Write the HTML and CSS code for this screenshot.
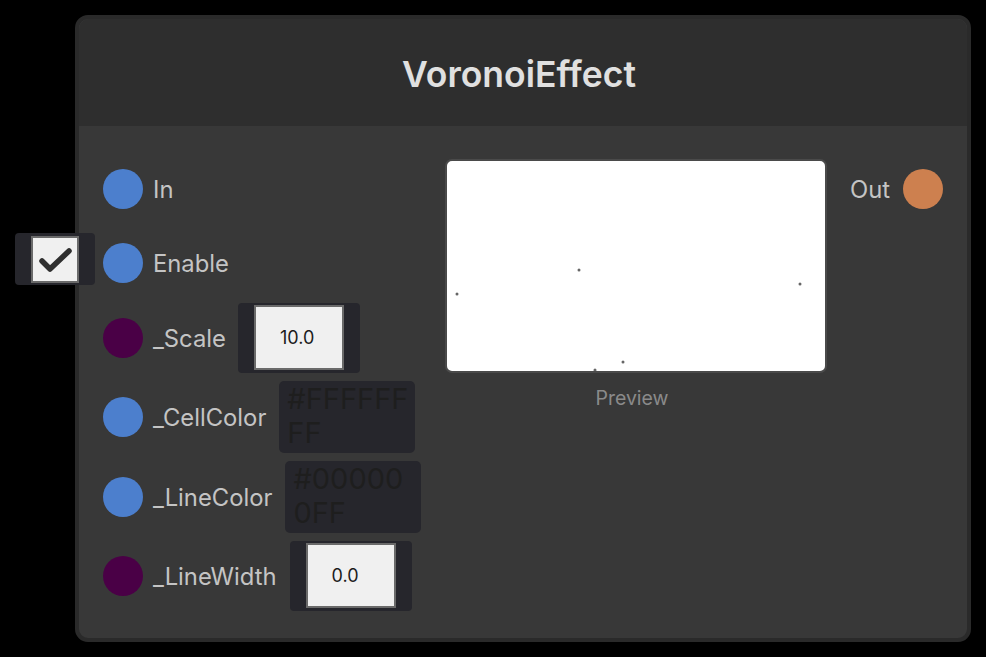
FILE: index.html
```html
<!DOCTYPE html>
<html>
<head>
<meta charset="utf-8">
<link rel="stylesheet" href="styles.css">
</head>
<body>
<div class="node">
  <div class="header"><span class="title">VoronoiEffect</span></div>
  <div class="content">
    <div class="inputs">
      <div class="row r-in">
        <span class="port blue"></span><span class="label">In</span>
      </div>
      <div class="row r-enable">
        <div class="toggle">
          <div class="check">
            <svg width="44" height="43" viewBox="0 0 44 43"><path d="M9 23 L17 31 L36 13" fill="none" stroke="#2f2f2f" stroke-width="5.5" stroke-linecap="round" stroke-linejoin="round"/></svg>
          </div>
        </div>
        <span class="port blue"></span><span class="label">Enable</span>
      </div>
      <div class="row r-scale">
        <span class="port purple"></span><span class="label">_Scale</span>
        <div class="numfield"><div class="numbox">10.0</div></div>
      </div>
      <div class="row r-cell">
        <span class="port blue"></span><span class="label">_CellColor</span>
        <div class="colorfield">#FFFFFF<br>FF</div>
      </div>
      <div class="row r-line">
        <span class="port blue"></span><span class="label">_LineColor</span>
        <div class="colorfield">#00000<br>0FF</div>
      </div>
      <div class="row r-width">
        <span class="port purple"></span><span class="label">_LineWidth</span>
        <div class="numfield"><div class="numbox">0.0</div></div>
      </div>
    </div>
    <div class="preview-col">
      <div class="preview">
        <svg width="378" height="210" viewBox="0 0 378 210">
          <circle cx="10" cy="133" r="1.5" fill="#666"/>
          <circle cx="132" cy="109" r="1.5" fill="#666"/>
          <circle cx="353" cy="123" r="1.5" fill="#666"/>
          <circle cx="176" cy="201" r="1.5" fill="#666"/>
          <circle cx="148" cy="209" r="1.5" fill="#666"/>
        </svg>
      </div>
      <div class="preview-label">Preview</div>
    </div>
    <div class="outputs">
      <div class="row out-row">
        <span class="label">Out</span><span class="port orange"></span>
      </div>
    </div>
  </div>
</div>
</body>
</html>
```

FILE: styles.css
```css
html, body {
  margin: 0;
  padding: 0;
  background: #000;
}
body {
  width: 986px;
  height: 657px;
  font-family: Inter, "Noto Sans", sans-serif;
  overflow: hidden;
}
.node {
  position: relative;
  margin: 15px 0 0 75px;
  width: 888px;
  height: 619px;
  border: 4px solid #2a2a2a;
  border-radius: 13px;
  background: #383838;
  display: flex;
  flex-direction: column;
}
.header {
  height: 107px;
  background: #2e2e2e;
  border-radius: 10px 10px 0 0;
  display: flex;
  align-items: center;
  justify-content: center;
}
.title {
  color: #e0e0e0;
  font-size: 35.5px;
  font-weight: 600;
  margin-top: 3px;
  margin-left: -8px;
}
.content {
  flex: 1;
  display: flex;
  padding: 26px 24px 0 24px;
}
.inputs {
  width: 342px;
  display: flex;
  flex-direction: column;
}
.row {
  position: relative;
  display: flex;
  align-items: center;
  height: 74px;
}
.r-scale { height: 76px; }
.r-cell { height: 76px; margin-top: 3px; }
.r-line { height: 76px; margin-top: 4px; }
.r-width { height: 76px; margin-top: 3px; }
.port {
  width: 40px;
  height: 40px;
  border-radius: 50%;
  flex: none;
}
.blue { background: #4c7fcd; }
.purple { background: #4a0046; }
.orange { background: #cd804f; }
.label {
  color: #c4c4c4;
  font-size: 23.8px;
  margin-left: 10px;
  margin-top: 0;
}
.out-row .label {
  margin-left: 0;
  margin-right: 13px;
}
.toggle {
  position: absolute;
  left: -88px;
  top: 7px;
  width: 80px;
  height: 52px;
  background: #26262c;
  border-radius: 4px;
  display: flex;
  align-items: center;
  justify-content: center;
}
.check {
  width: 44px;
  height: 43px;
  border: 2px solid #6a6a6a;
  background: #f0f0f0;
  display: flex;
}
.numfield {
  margin-left: 12px;
  width: 122px;
  height: 70px;
  background: #26262c;
  border-radius: 4px;
  display: flex;
  justify-content: center;
  padding-top: 2px;
  box-sizing: border-box;
}
.r-width .numfield { margin-left: 13px; }
.numbox {
  width: 86px;
  height: 61px;
  box-sizing: content-box;
  border: 2px solid #6a6a6a;
  background: #f0f0f0;
  color: #1c1c1c;
  font-size: 18px;
  display: flex;
  align-items: center;
  justify-content: flex-start;
  padding-left: 0;
  text-indent: 24px;
}
.colorfield {
  margin-left: 13px;
  width: 136px;
  height: 72px;
  box-sizing: border-box;
  background: #26262c;
  border-radius: 5px;
  padding: 1px 0 0 8px;
  color: #1e1e1e;
  font-size: 29px;
  line-height: 34px;
  overflow: hidden;
  white-space: nowrap;
}
.preview-col {
  width: 382px;
  padding-top: 7px;
  display: flex;
  flex-direction: column;
  align-items: center;
}
.preview {
  width: 378px;
  height: 210px;
  border: 2px solid #4a4a4a;
  border-radius: 7px;
  background: #fff;
  overflow: hidden;
}
.preview svg { display: block; }
.preview-label {
  margin-top: 13px;
  margin-right: 8px;
  color: #8a8a8a;
  font-size: 19.5px;
}
.outputs {
  flex: 1;
  display: flex;
  justify-content: flex-end;
  align-items: flex-start;
}
```
